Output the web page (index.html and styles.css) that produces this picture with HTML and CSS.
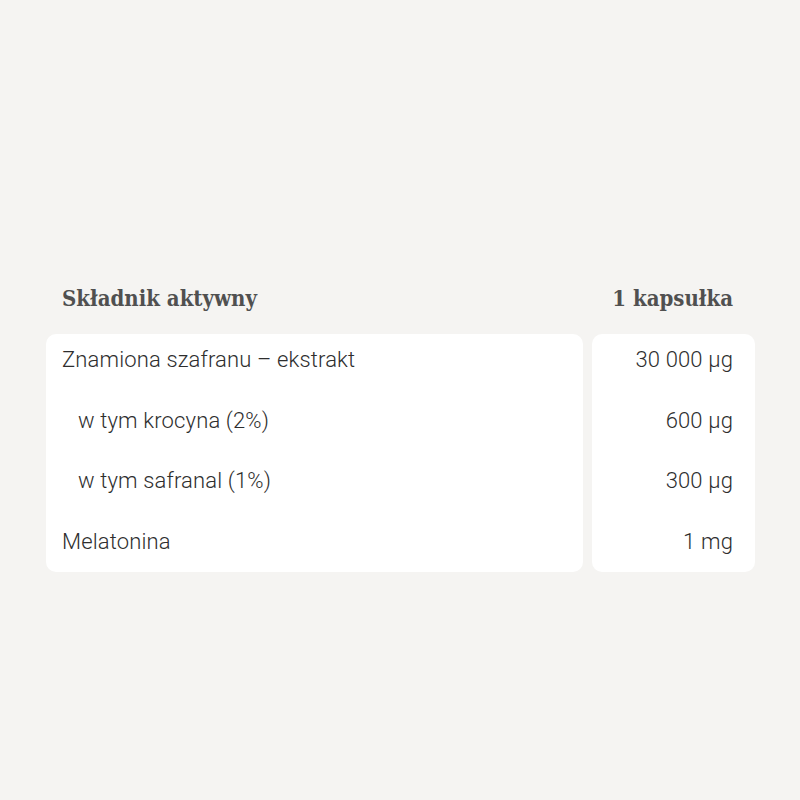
FILE: index.html
```html
<!DOCTYPE html>
<html lang="pl">
<head>
<meta charset="utf-8">
<link rel="stylesheet" href="styles.css">
</head>
<body>
<div class="page">
  <div class="table">
    <div class="head">
      <div class="head-cell">Składnik aktywny</div>
      <div class="head-cell right">1 kapsułka</div>
    </div>
    <div class="cards">
      <div class="card names">
        <div class="row">Znamiona szafranu – ekstrakt</div>
        <div class="row sub">w tym krocyna (2%)</div>
        <div class="row sub">w tym safranal (1%)</div>
        <div class="row">Melatonina</div>
      </div>
      <div class="card values">
        <div class="row">30 000 µg</div>
        <div class="row">600 µg</div>
        <div class="row">300 µg</div>
        <div class="row">1 mg</div>
      </div>
    </div>
  </div>
</div>
</body>
</html>
```

FILE: styles.css
```css
html, body {
  margin: 0;
  padding: 0;
  background: #f5f4f2;
}
.page {
  width: 800px;
  height: 800px;
  box-sizing: border-box;
  padding: 286px 45px 0 46px;
}
.table {
  width: 709px;
}
.head {
  display: grid;
  grid-template-columns: 1fr 163px;
  column-gap: 9px;
  margin-bottom: 24px;
}
.head-cell {
  font-family: "DejaVu Serif Condensed", "DejaVu Serif", serif;
  font-stretch: condensed;
  font-weight: bold;
  font-size: 22px;
  line-height: 24px;
  color: #505050;
  padding-left: 16px;
}
.head-cell.right {
  text-align: right;
  padding-left: 0;
  padding-right: 22px;
}
.cards {
  display: grid;
  grid-template-columns: 1fr 163px;
  column-gap: 9px;
}
.card {
  background: #ffffff;
  border-radius: 10px;
  display: flex;
  flex-direction: column;
  gap: 36.67px;
  padding: 14px 16px 18px 16px;
}
.values {
  text-align: right;
  padding-right: 22px;
}
.row {
  font-family: Roboto, "Liberation Sans", sans-serif;
  font-weight: 300;
  font-size: 22px;
  line-height: 24px;
  letter-spacing: 0.15px;
  color: #2e2e2e;
}
.row.sub {
  padding-left: 16px;
}
```
